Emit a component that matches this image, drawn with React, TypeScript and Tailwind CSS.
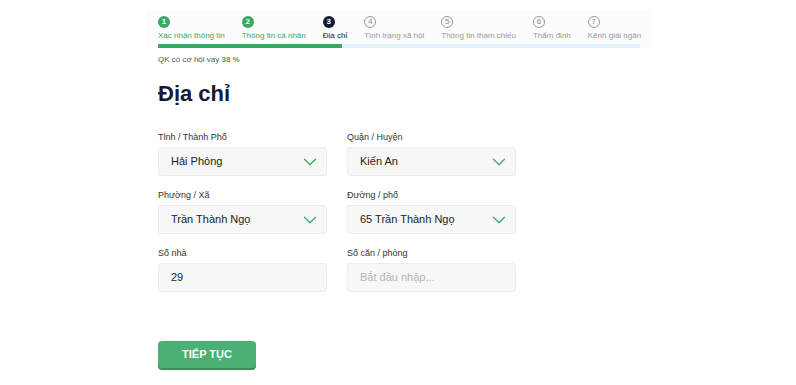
import { ChevronDown } from 'lucide-react';

const steps = [
  { n: 1, label: 'Xác nhận thông tin', state: 'done' },
  { n: 2, label: 'Thông tin cá nhân', state: 'done' },
  { n: 3, label: 'Địa chỉ', state: 'current' },
  { n: 4, label: 'Tình trạng xã hội', state: 'todo' },
  { n: 5, label: 'Thông tin tham chiếu', state: 'todo' },
  { n: 6, label: 'Thẩm định', state: 'todo' },
  { n: 7, label: 'Kênh giải ngân', state: 'todo' },
];

function StepCircle({ n, state }: { n: number; state: string }) {
  if (state === 'done') {
    return (
      <span className="flex h-[12px] w-[12px] items-center justify-center rounded-full bg-[#3aa864] text-[8px] font-bold leading-none text-white">
        {n}
      </span>
    );
  }
  if (state === 'current') {
    return (
      <span className="flex h-[12px] w-[12px] items-center justify-center rounded-full bg-[#141a33] text-[8px] font-bold leading-none text-white">
        {n}
      </span>
    );
  }
  return (
    <span className="flex h-[12px] w-[12px] items-center justify-center rounded-full border border-[#9a9a9a] text-[8px] leading-none text-[#8a8a8a]">
      {n}
    </span>
  );
}

function Field({ label, value, select, placeholder }: { label: string; value?: string; select?: boolean; placeholder?: string }) {
  return (
    <div className="flex w-[169px] flex-col">
      <label className="mb-[3px] h-[14px] text-[9px] leading-[14px] text-[#333]">{label}</label>
      <div className="flex h-[29px] items-center justify-between rounded-[3px] border border-[#ececec] bg-[#f7f7f7] pl-[12px] pr-[5px]">
        {value ? (
          <span className="text-[11px] text-[#222]">{value}</span>
        ) : (
          <span className="text-[11px] text-[#b5b5b5]">{placeholder}</span>
        )}
        {select && <ChevronDown className="h-[22px] w-[22px] text-[#3aa864]" strokeWidth={1.3} />}
      </div>
    </div>
  );
}

export default function App() {
  return (
    <div className="min-h-[385px] w-full bg-white font-['Liberation_Sans',Arial,sans-serif]">
      <div className="mx-auto w-[504px] pt-[10px]">
        <div className="bg-[#fcfcfc] pl-[12px] pr-[10px] pt-[6px]">
          <div className="flex gap-[17px]">
            {steps.map((s) => (
              <div key={s.n} className="flex flex-col">
                <StepCircle n={s.n} state={s.state} />
                <span
                  className={
                    'mt-[2px] whitespace-nowrap text-[8px] leading-[11px] ' +
                    (s.state === 'done' ? 'text-[#3aa864]' : s.state === 'current' ? 'text-[#141a33]' : 'text-[#999]')
                  }
                >
                  {s.label}
                </span>
              </div>
            ))}
          </div>
          <div className="mt-[3px] flex h-[4px] w-full bg-[#e3f1f8]">
            <div className="h-full w-[184px] bg-[#3aa864]" />
          </div>
        </div>
        <div className="pl-[12px]">
          <p className="mt-[7px] text-[8px] leading-[10px] text-[#555]">
            QK có cơ hội vay <span className="font-bold text-[#3aa864]">38 %</span>
          </p>
          <h1 className="mt-[16px] text-[22px] font-bold leading-[26px] text-[#141a33]">Địa chỉ</h1>
          <div className="mt-[23px] grid w-[358px] grid-cols-2 gap-x-[20px] gap-y-[12px]">
            <Field label="Tỉnh / Thành Phố" value="Hải Phòng" select />
            <Field label="Quận / Huyện" value="Kiến An" select />
            <Field label="Phường / Xã" value="Trần Thành Ngọ" select />
            <Field label="Đường / phố" value="65 Trần Thành Ngọ" select />
            <Field label="Số nhà" value="29" />
            <Field label="Số căn / phòng" placeholder="Bắt đầu nhập..." />
          </div>
          <button className="mt-[49px] flex h-[27px] w-[98px] items-center justify-center rounded-[4px] bg-[#4caf73] text-[11px] font-bold text-white shadow-[0_2px_0_#3a8f5c]">
            TIẾP TỤC
          </button>
        </div>
      </div>
    </div>
  );
}
